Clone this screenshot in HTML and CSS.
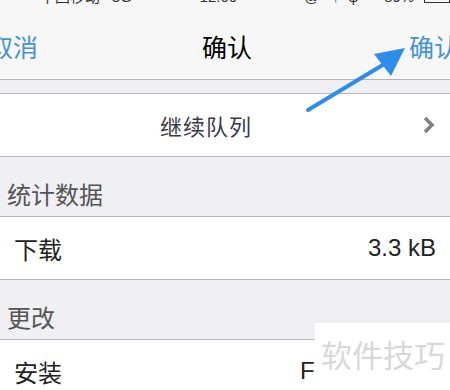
FILE: index.html
```html
<!DOCTYPE html>
<html>
<head>
  <meta charset="utf-8">
  <title>确认</title>
  <link rel="stylesheet" href="styles.css">
</head>
<body>
  <div class="status">
    <div class="status-in">
      <span class="carrier">中国移动</span>
      <span class="net">3G</span>
      <span class="time">12:00</span>
      <span class="icons">@ &nbsp;&nbsp;↑ &nbsp;ψ</span>
      <span class="batt-text">89%</span>
      <span class="batt"></span>
    </div>
  </div>

  <div class="nav">
    <span class="nav-btn cancel">取消</span>
    <span class="nav-title">确认</span>
    <span class="nav-btn ok">确认</span>
  </div>

  <div class="spacer"></div>

  <div class="group">
    <div class="row center">
      <span class="row-label">继续队列</span>
      <svg class="chevron" width="14" height="18" viewBox="0 0 14 18">
        <path d="M3 2 L10 9 L3 16" fill="none" stroke="#808080" stroke-width="3.6"/>
      </svg>
    </div>
  </div>

  <div class="section-title">统计数据</div>
  <div class="group">
    <div class="row">
      <span class="row-label">下载</span>
      <span class="row-value">3.3 kB</span>
    </div>
  </div>

  <div class="section-title">更改</div>
  <div class="group">
    <div class="row">
      <span class="row-label">安装</span>
      <span class="row-value fixed">F</span>
    </div>
  </div>

  <svg class="arrow" width="120" height="80" viewBox="300 40 120 80">
    <line x1="308" y1="110" x2="386" y2="63" stroke="#2e8de8" stroke-width="4" stroke-linecap="round"/>
    <polygon points="405,48 374,54 391,76" fill="#2e8de8"/>
  </svg>

  <div class="watermark">软件技巧</div>
</body>
</html>
```

FILE: styles.css
```css
html, body {
  margin: 0;
  padding: 0;
}

body {
  width: 450px;
  height: 390px;
  overflow: hidden;
  position: relative;
  background: #efeff4;
  font-family: "Liberation Sans", "Noto Sans CJK SC", sans-serif;
  color: #222;
}

.status {
  height: 7px;
  overflow: hidden;
  background: #f7f7f7;
}

.status-in {
  display: flex;
  align-items: center;
  height: 16px;
  margin-top: -11px;
  font-size: 15px;
  line-height: 16px;
  color: #333;
}

.carrier {
  margin-left: 40px;
  width: 72px;
}

.net {
  width: 88px;
}

.time {
  width: 105px;
}

.icons {
  width: 80px;
}

.batt-text {
  width: 40px;
}

.batt {
  width: 24px;
  height: 10px;
  border: 1px solid #333;
}

.nav {
  height: 67px;
  padding-top: 5px;
  background: #f7f7f7;
  border-bottom: 1px solid #b4b4b4;
  display: grid;
  grid-template-columns: 1fr auto 1fr;
  align-items: center;
  font-size: 25px;
}

.nav-btn {
  color: #4593d2;
}

.cancel {
  margin-left: -12px;
}

.ok {
  justify-self: end;
  margin-right: -9px;
}

.nav-title {
  color: #000;
  margin-left: 4px;
}

.spacer {
  height: 13px;
}

.group {
  background: #fff;
  border-top: 1px solid #b8b8bc;
  border-bottom: 1px solid #b8b8bc;
}

.row {
  height: 62px;
  display: flex;
  align-items: center;
  padding: 0 14px;
  font-size: 24px;
}

.row.center {
  justify-content: center;
  position: relative;
  font-size: 22px;
  letter-spacing: 1px;
}

.row.center .row-label {
  color: #3a3a44;
  margin-left: -38px;
}

.chevron {
  position: absolute;
  right: 14px;
  top: 22px;
}

.row-value {
  margin-left: auto;
  color: #222;
}

.row-value.fixed {
  width: 136px;
}

.section-title {
  height: 46px;
  padding: 13px 0 0 7px;
  display: flex;
  align-items: center;
  font-size: 24px;
  color: #555;
}

.arrow {
  position: absolute;
  left: 300px;
  top: 40px;
}

.watermark {
  position: absolute;
  left: 315px;
  top: 323px;
  width: 135px;
  height: 67px;
  background: #fff;
  font-size: 31px;
  color: #d8d8d8;
  padding-left: 6px;
  line-height: 68px;
  box-sizing: border-box;
}
```
